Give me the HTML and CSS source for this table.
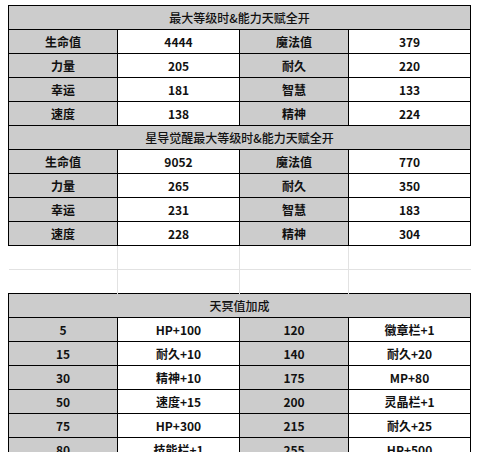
FILE: index.html
```html
<!DOCTYPE html>
<html lang="zh">
<head>
<meta charset="utf-8">
<link rel="stylesheet" href="styles.css">
</head>
<body>
<div class="page">
<table class="sheet">
  <colgroup>
    <col class="c-key"><col class="c-val"><col class="c-key"><col class="c-val">
  </colgroup>
  <tbody>
    <tr><td class="head" colspan="4">最大等级时&amp;能力天赋全开</td></tr>
    <tr><td class="key">生命值</td><td class="val">4444</td><td class="key">魔法值</td><td class="val">379</td></tr>
    <tr><td class="key">力量</td><td class="val">205</td><td class="key">耐久</td><td class="val">220</td></tr>
    <tr><td class="key">幸运</td><td class="val">181</td><td class="key">智慧</td><td class="val">133</td></tr>
    <tr><td class="key">速度</td><td class="val">138</td><td class="key">精神</td><td class="val">224</td></tr>
    <tr><td class="head" colspan="4">星导觉醒最大等级时&amp;能力天赋全开</td></tr>
    <tr><td class="key">生命值</td><td class="val">9052</td><td class="key">魔法值</td><td class="val">770</td></tr>
    <tr><td class="key">力量</td><td class="val">265</td><td class="key">耐久</td><td class="val">350</td></tr>
    <tr><td class="key">幸运</td><td class="val">231</td><td class="key">智慧</td><td class="val">183</td></tr>
    <tr><td class="key">速度</td><td class="val">228</td><td class="key">精神</td><td class="val">304</td></tr>
    <tr class="blank first"><td></td><td></td><td></td><td></td></tr>
    <tr class="blank last"><td></td><td></td><td></td><td></td></tr>
    <tr><td class="head" colspan="4">天冥值加成</td></tr>
    <tr><td class="key">5</td><td class="val">HP+100</td><td class="key">120</td><td class="val">徽章栏+1</td></tr>
    <tr><td class="key">15</td><td class="val">耐久+10</td><td class="key">140</td><td class="val">耐久+20</td></tr>
    <tr><td class="key">30</td><td class="val">精神+10</td><td class="key">175</td><td class="val">MP+80</td></tr>
    <tr><td class="key">50</td><td class="val">速度+15</td><td class="key">200</td><td class="val">灵晶栏+1</td></tr>
    <tr><td class="key">75</td><td class="val">HP+300</td><td class="key">215</td><td class="val">耐久+25</td></tr>
    <tr><td class="key">80</td><td class="val">技能栏+1</td><td class="key">255</td><td class="val">HP+500</td></tr>
  </tbody>
</table>
</div>
</body>
</html>
```

FILE: styles.css
```css
html, body {
  margin: 0;
  padding: 0;
  background: #ffffff;
}
.page {
  padding: 5px 0 0 8px;
}
.sheet {
  border-collapse: collapse;
  table-layout: fixed;
  width: 463px;
  font-family: "Noto Sans CJK SC", "Microsoft YaHei", sans-serif;
  font-size: 12px;
  color: #111;
}
.c-key { width: 109px; }
.c-val { width: 122px; }
.sheet td {
  height: 23px;
  padding: 0;
  border: 1px solid #000;
  text-align: center;
  vertical-align: middle;
  line-height: 14px;
  white-space: nowrap;
  overflow: hidden;
}
.sheet td.head {
  background: #cccccc;
  font-weight: 500;
}
.sheet td.key {
  background: #cccccc;
  font-weight: 700;
}
.sheet td.val {
  background: #ffffff;
  font-weight: 700;
}
.sheet tr.blank td {
  border: none;
  border-right: 1px solid #e2e2e2;
}
.sheet tr.blank td:last-child {
  border-right: none;
}
.sheet tr.blank.first td {
  border-bottom: 1px solid #e2e2e2;
}
```
